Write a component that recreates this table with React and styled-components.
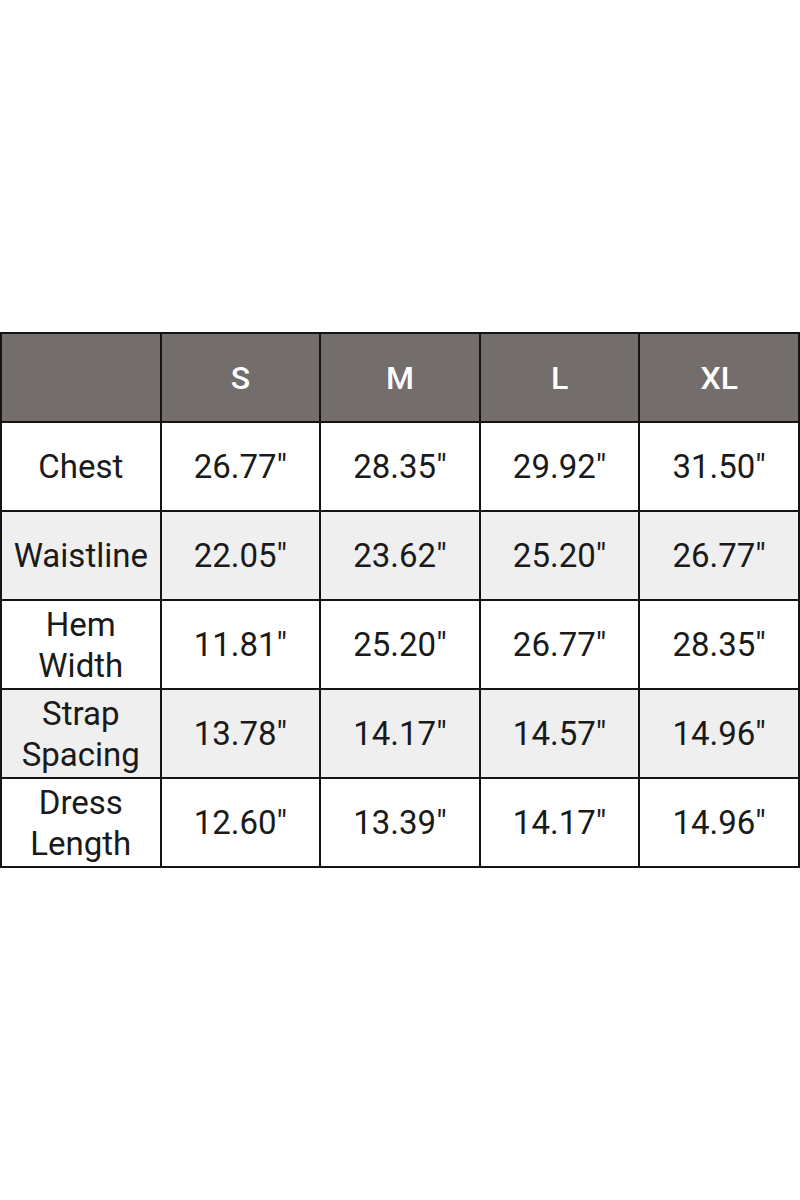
import styled, { createGlobalStyle } from "styled-components";

const SIZES = ["S", "M", "L", "XL"];

const ROWS = [
  { label: ["Chest"], values: ['26.77"', '28.35"', '29.92"', '31.50"'] },
  { label: ["Waistline"], values: ['22.05"', '23.62"', '25.20"', '26.77"'] },
  { label: ["Hem", "Width"], values: ['11.81"', '25.20"', '26.77"', '28.35"'] },
  { label: ["Strap", "Spacing"], values: ['13.78"', '14.17"', '14.57"', '14.96"'] },
  { label: ["Dress", "Length"], values: ['12.60"', '13.39"', '14.17"', '14.96"'] },
];

const Global = createGlobalStyle`
  html, body {
    margin: 0;
    padding: 0;
    background: #ffffff;
  }
`;

export default function App() {
  return (
    <Page>
      <Global />
      <Table>
        <colgroup>
          {[0, 1, 2, 3, 4].map((i) => (
            <col key={i} style={{ width: "20%" }} />
          ))}
        </colgroup>
        <thead>
          <HeadRow>
            <HeadCell />
            {SIZES.map((s) => (
              <HeadCell key={s}>{s}</HeadCell>
            ))}
          </HeadRow>
        </thead>
        <tbody>
          {ROWS.map((r, i) => (
            <BodyRow key={r.label.join(" ")} $shaded={i % 2 === 1}>
              <Cell>
                {r.label.map((l) => (
                  <Line key={l}>{l}</Line>
                ))}
              </Cell>
              {r.values.map((v, j) => (
                <Cell key={j}>{v}</Cell>
              ))}
            </BodyRow>
          ))}
        </tbody>
      </Table>
    </Page>
  );
}

const Page = styled.div`
  width: 800px;
  height: 1200px;
  display: flex;
  align-items: center;
  justify-content: center;
  font-family: Roboto, "Liberation Sans", sans-serif;
`;

const Table = styled.table`
  width: 800px;
  table-layout: fixed;
  border-collapse: collapse;
  border: 2px solid #141414;
`;

const HeadRow = styled.tr`
  height: 89px;
  background: #736d6c;
`;

const HeadCell = styled.th`
  border: 2px solid #141414;
  color: #ffffff;
  font-size: 32px;
  font-weight: 500;
  text-align: center;
  vertical-align: middle;
  padding: 0;
`;

const BodyRow = styled.tr`
  height: 89px;
  background: ${(p) => (p.$shaded ? "#efefef" : "#ffffff")};
`;

const Cell = styled.td`
  border: 2px solid #141414;
  color: #1a1a1a;
  font-size: 33px;
  font-weight: 400;
  text-align: center;
  vertical-align: middle;
  padding: 0;
  line-height: 41px;
`;

const Line = styled.div`
  line-height: 41px;
`;
